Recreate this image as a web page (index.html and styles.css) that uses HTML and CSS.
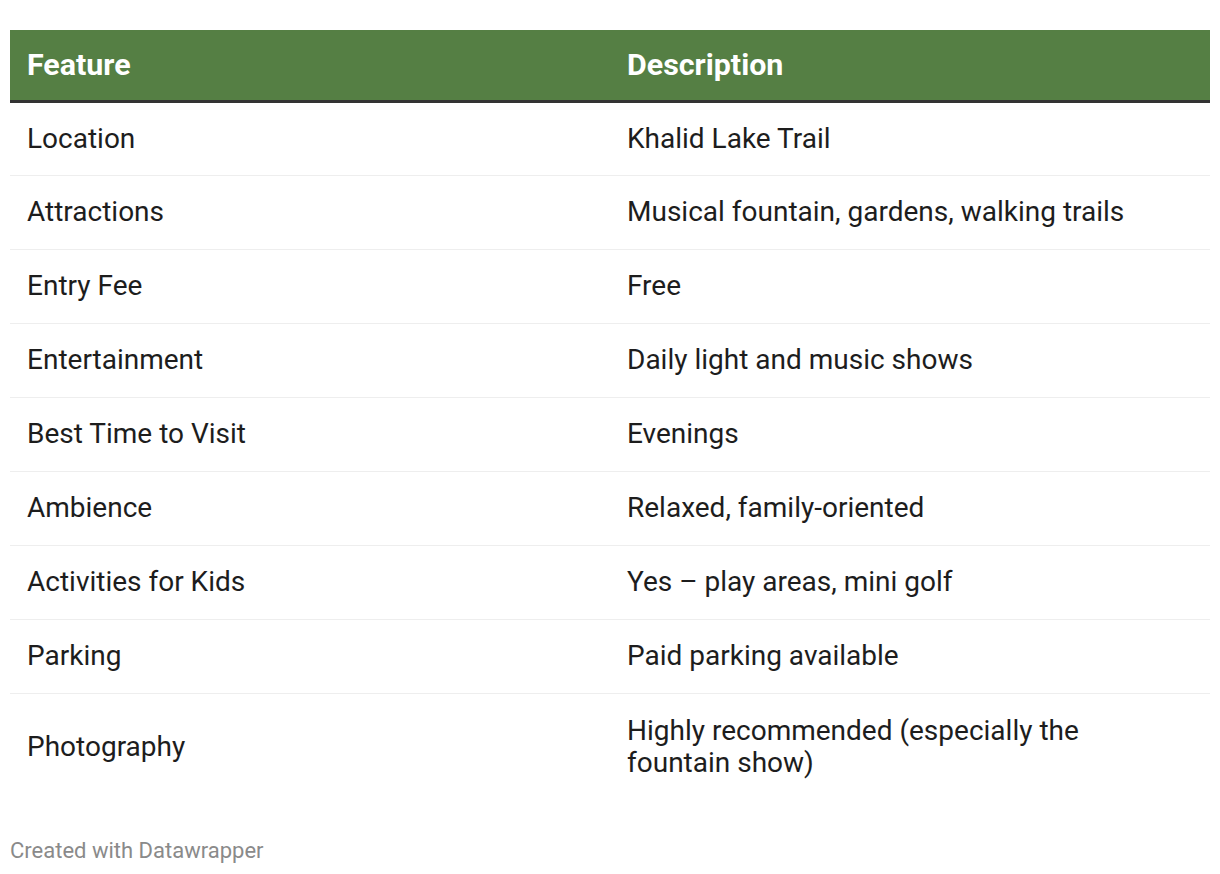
FILE: index.html
```html
<!DOCTYPE html>
<html lang="en">
<head>
<meta charset="utf-8">
<title>Table</title>
<link rel="stylesheet" href="styles.css">
</head>
<body>
<div class="wrap">
  <table class="tbl">
    <thead>
      <tr><th>Feature</th><th>Description</th></tr>
    </thead>
    <tbody>
      <tr><td>Location</td><td>Khalid Lake Trail</td></tr>
      <tr><td>Attractions</td><td>Musical fountain, gardens, walking trails</td></tr>
      <tr><td>Entry Fee</td><td>Free</td></tr>
      <tr><td>Entertainment</td><td>Daily light and music shows</td></tr>
      <tr><td>Best Time to Visit</td><td>Evenings</td></tr>
      <tr><td>Ambience</td><td>Relaxed, family-oriented</td></tr>
      <tr><td>Activities for Kids</td><td>Yes – play areas, mini golf</td></tr>
      <tr><td>Parking</td><td>Paid parking available</td></tr>
      <tr class="last"><td>Photography</td><td>Highly recommended (especially the fountain show)</td></tr>
    </tbody>
  </table>
  <div class="footer">Created with Datawrapper</div>
</div>
</body>
</html>
```

FILE: styles.css
```css
html, body {
  margin: 0;
  padding: 0;
  background: #ffffff;
}
body {
  font-family: Roboto, "Liberation Sans", sans-serif;
  color: #1d1d1d;
}
.wrap {
  padding: 30px 10px 0 10px;
}
.tbl {
  width: 1200px;
  border-collapse: collapse;
  table-layout: fixed;
}
.tbl th {
  background: #557f44;
  color: #ffffff;
  font-weight: 700;
  font-size: 30.4px;
  text-align: left;
  height: 71px;
  padding: 0 30px 0 17px;
  border-bottom: 3px solid #333333;
  box-sizing: border-box;
  vertical-align: middle;
}
.tbl td {
  font-size: 28px;
  line-height: 32px;
  height: 74px;
  padding: 0 30px 0 17px;
  box-sizing: border-box;
  border-bottom: 1px solid #eeeeee;
  vertical-align: middle;
}
.tbl tr.last td {
  border-bottom: none;
  height: 108px;
}
.footer {
  margin-top: 37px;
  font-size: 22px;
  color: #8a8a8a;
  line-height: 26px;
}
```
